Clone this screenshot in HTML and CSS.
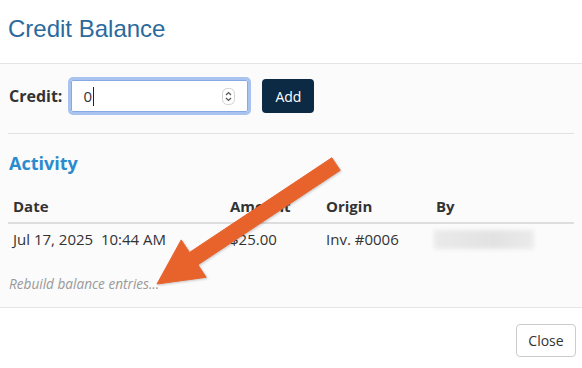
FILE: index.html
```html
<!DOCTYPE html>
<html lang="en">
<head>
    <meta charset="UTF-8">
    <title>Credit Balance</title>
    <link rel="stylesheet" href="styles.css">
</head>
<body>

    <div class="modal">

        <!-- Title -->
        <div class="modal-header">
            <h4 class="modal-title">Credit Balance</h4>
        </div>

        <div class="modal-body">

            <!-- Add credit form -->
            <div class="credit-form">
                <label class="credit-label">Credit:</label>
                <div class="credit-input">
                    <span class="credit-value">0</span><span class="caret"></span>
                    <svg class="spinner" width="13" height="17" viewBox="0 0 13 17">
                        <rect x="0.5" y="0.5" width="12" height="16" rx="5" fill="#fff" stroke="#d0d0d0"/>
                        <path d="M4 7 L6.5 4.5 L9 7" fill="none" stroke="#555" stroke-width="1.2"/>
                        <path d="M4 10 L6.5 12.5 L9 10" fill="none" stroke="#555" stroke-width="1.2"/>
                    </svg>
                </div>
                <button class="btn btn-primary">Add</button>
            </div>

            <hr class="divider">

            <h3 class="section-title">Activity</h3>

            <table class="activity-table">
                <thead>
                    <tr>
                        <th class="col-date">Date</th>
                        <th class="col-amount">Amount</th>
                        <th class="col-origin">Origin</th>
                        <th>By</th>
                    </tr>
                </thead>
                <tbody>
                    <tr>
                        <td>Jul 17, 2025&nbsp; 10:44 AM</td>
                        <td>$25.00</td>
                        <td>Inv. #0006</td>
                        <td><span class="blurred"></span></td>
                    </tr>
                </tbody>
            </table>

            <div class="rebuild-link">Rebuild balance entries...</div>
        </div>

        <div class="modal-footer">
            <button class="btn btn-default">Close</button>
        </div>

        <!-- Annotation arrow -->
        <svg class="annotation" width="582" height="368" viewBox="0 0 582 368">
            <polygon points="331.8,157.8 340.2,170.3 197.9,264.8 206.2,277.3 157,284 181.2,239.9 189.5,252.4"
                     fill="#e8632c" stroke="#e8632c" stroke-width="1" stroke-linejoin="round"/>
        </svg>
    </div>

</body>
</html>
```

FILE: styles.css
```css
body {
    margin: 0;
    font-family: "Open Sans", "Liberation Sans", sans-serif;
    color: #333;
    background: #fff;
}

.modal {
    position: relative;
    width: 582px;
    height: 368px;
    overflow: hidden;
}

.modal-header {
    height: 64px;
    padding: 15px 8px 0;
    box-sizing: border-box;
    border-bottom: 1px solid #e5e5e5;
    background: #fff;
}

.modal-title {
    margin: 0;
    font-family: "Liberation Sans", Arial, sans-serif;
    font-weight: normal;
    font-size: 24px;
    line-height: 28px;
    color: #2b6a9c;
}

.modal-body {
    height: 244px;
    box-sizing: border-box;
    padding: 13px 8px 0;
    background: #fbfbfb;
    border-bottom: 1px solid #e5e5e5;
}

.credit-form {
    display: flex;
    align-items: center;
    height: 38px;
    padding-left: 1px;
}

.credit-label {
    font-weight: bold;
    font-size: 16px;
    color: #333;
    margin-right: 6px;
}

.credit-input {
    display: flex;
    align-items: center;
    width: 183px;
    height: 38px;
    box-sizing: border-box;
    padding: 0 13px 0 12px;
    border: 3px solid #a8c3ef;
    border-radius: 5px;
    background: #fff;
    box-shadow: inset 0 0 0 1px #86a9e6;
    font-size: 15px;
    color: #333;
}

.caret {
    width: 1px;
    height: 19px;
    margin-left: 1px;
    background: #222;
}

.spinner {
    margin-left: auto;
}

.btn {
    font-family: "Open Sans", sans-serif;
    font-size: 14px;
    border-radius: 4px;
    cursor: pointer;
}

.btn-primary {
    margin-left: 11px;
    width: 52px;
    height: 34px;
    border: none;
    background: #0c2a44;
    color: #fff;
}

.btn-default {
    width: 60px;
    height: 33px;
    border: 1px solid #ccc;
    background: #fff;
    color: #333;
}

.divider {
    margin: 18px 0 17px;
    border: 0;
    border-top: 1px solid #e2e2e2;
}

.section-title {
    margin: 0 0 15px 1px;
    font-size: 18px;
    line-height: 24px;
    font-weight: bold;
    color: #2a8bcf;
}

.activity-table {
    width: 100%;
    border-collapse: collapse;
    font-size: 15px;
}

.activity-table th {
    text-align: left;
    font-weight: bold;
    line-height: 20px;
    padding: 6px 5px;
    border-bottom: 2px solid #dddddd;
    color: #333;
}

.activity-table td {
    line-height: 20px;
    padding: 5px 5px;
    color: #333;
}

.col-date { width: 207px; }
.col-amount { width: 86px; }
.col-origin { width: 100px; }

.blurred {
    display: block;
    width: 100px;
    height: 19px;
    margin-left: -2px;
    background: linear-gradient(90deg, #eaeaea, #e2e2e2 60%, #ebebeb);
    filter: blur(2px);
}

.rebuild-link {
    margin: 21px 0 0 1px;
    font-size: 13.6px;
    line-height: 18px;
    font-style: italic;
    color: #999;
}

.modal-footer {
    display: flex;
    justify-content: flex-end;
    padding: 16px 6px 0;
}

/* Arrow drawn over the content */
.annotation {
    position: absolute;
    top: 0;
    left: 0;
    pointer-events: none;
    filter: drop-shadow(1px 1px 1px rgba(0, 0, 0, 0.2));
}
```
